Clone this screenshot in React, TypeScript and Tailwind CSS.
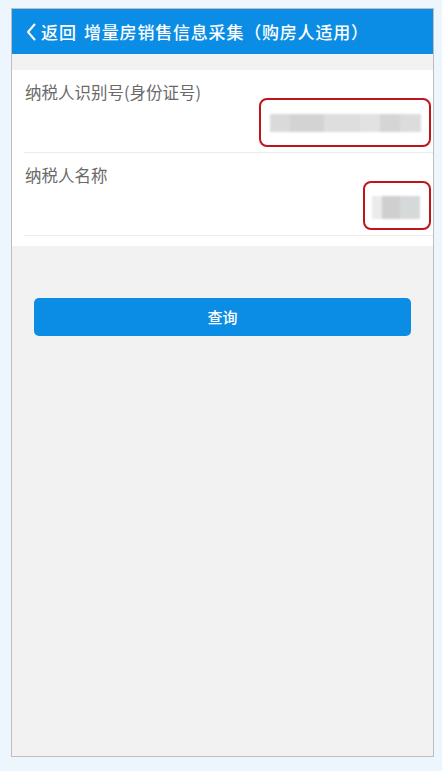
import React from "react";

const cjk = { fontFamily: '"Noto Sans CJK SC", "Noto Sans", sans-serif' };

const Chevron = () => (
  <svg width="10" height="18" viewBox="0 0 10 18" className="mr-[5px]">
    <path d="M8.5 1.5 L2 9 L8.5 16.5" fill="none" stroke="white" strokeWidth="2" strokeLinecap="round" strokeLinejoin="round" />
  </svg>
);

const Masked = ({ wide }: { wide?: boolean }) =>
  wide ? (
    <div className="flex h-[49px] w-[172px] items-center justify-end rounded-[8px] border-2 border-[#c0141c] pr-[8px]">
      <div className="flex h-[18px] w-[151px] blur-[1px]">
        <div className="w-[20px] bg-[#dadada]" />
        <div className="w-[34px] bg-[#d3d3d3]" />
        <div className="w-[36px] bg-[#dedede]" />
        <div className="w-[20px] bg-[#e2e2e2]" />
        <div className="w-[20px] bg-[#d5d5d5]" />
        <div className="w-[21px] bg-[#dcdcdc]" />
      </div>
    </div>
  ) : (
    <div className="flex h-[49px] w-[68px] items-center justify-end rounded-[8px] border-2 border-[#c0141c] pr-[9px]">
      <div className="mt-[3px] flex h-[23px] w-[48px] blur-[1px]">
        <div className="w-[10px] bg-[#ebebeb]" />
        <div className="w-[18px] bg-[#cfcfcf]" />
        <div className="w-[20px] bg-[#d6d9d9]" />
      </div>
    </div>
  );

const Row = ({ label, wide }: { label: string; wide?: boolean }) => (
  <div className="flex flex-col">
    <div className="flex flex-col pl-[13px] pr-[2px] pt-[10px] pb-[5px]">
      <div className="h-[24px] text-[16.5px] leading-[24px] text-[#6a6a6a]">{label}</div>
      <div className="mt-[-6px] flex justify-end">
        <Masked wide={wide} />
      </div>
    </div>
    <div className="ml-[12px] h-px bg-[#ebebeb]" />
  </div>
);

export default function App() {
  return (
    <div className="h-[771px] w-full bg-[#eef6fd] pt-[8px]" style={cjk}>
      <div className="ml-[11px] flex h-[749px] w-[423px] flex-col border border-[#bdbdbd] bg-[#f2f2f2]">
        <div className="flex h-[45px] items-center bg-[#0b8de6] pl-[14px] text-[17px] font-medium text-white">
          <Chevron />
          <span className="tracking-[1px]">返回</span>
          <span className="ml-[7px] tracking-[0.8px]">增量房销售信息采集（购房人适用）</span>
        </div>
        <div className="mt-[16px] flex flex-col bg-white pb-[10px]">
          <Row label="纳税人识别号(身份证号)" wide />
          <Row label="纳税人名称" />
        </div>
        <button className="ml-[22px] mt-[52px] h-[38px] w-[377px] rounded-[5px] bg-[#0b8de6] text-[15px] font-medium text-white">
          查询
        </button>
      </div>
    </div>
  );
}
